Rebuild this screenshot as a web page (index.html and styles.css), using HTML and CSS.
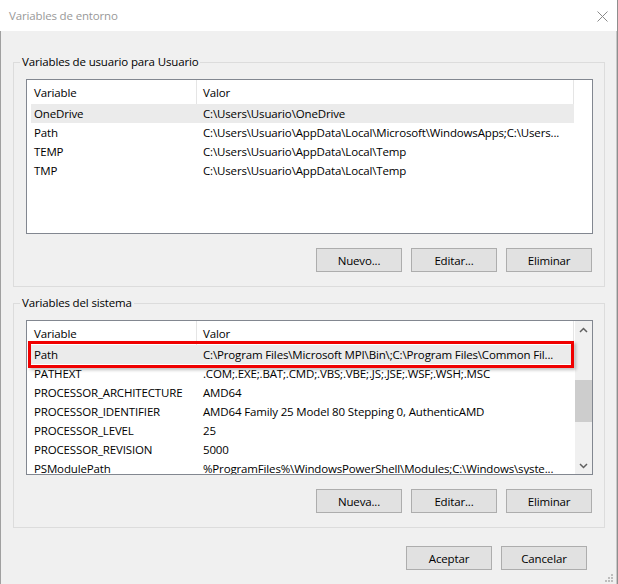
FILE: index.html
```html
<!DOCTYPE html>
<html lang="es">
<head>
<meta charset="utf-8">
<title>Variables de entorno</title>
<link rel="stylesheet" href="styles.css">
</head>
<body>
<div class="window">
  <div class="titlebar">
    <span class="title">Variables de entorno</span>
    <svg class="close" width="11" height="11" viewBox="0 0 11 11">
      <path d="M0.5 0.5 L10.5 10.5 M10.5 0.5 L0.5 10.5" stroke="#8a8a8a" stroke-width="1" fill="none"/>
    </svg>
  </div>

  <div class="client">
    <fieldset class="group">
      <legend>Variables de usuario para Usuario</legend>
      <div class="listview">
        <div class="lv-content">
          <div class="lv-header">
            <div class="hcell name">Variable</div>
            <div class="hcell value">Valor</div>
          </div>
          <div class="row selected"><div class="cell name">OneDrive</div><div class="cell value">C:\Users\Usuario\OneDrive</div></div>
          <div class="row"><div class="cell name">Path</div><div class="cell value">C:\Users\Usuario\AppData\Local\Microsoft\WindowsApps;C:\Users...</div></div>
          <div class="row"><div class="cell name">TEMP</div><div class="cell value">C:\Users\Usuario\AppData\Local\Temp</div></div>
          <div class="row"><div class="cell name">TMP</div><div class="cell value">C:\Users\Usuario\AppData\Local\Temp</div></div>
        </div>
      </div>
      <div class="actions">
        <button>Nuevo...</button>
        <button>Editar...</button>
        <button>Eliminar</button>
      </div>
    </fieldset>

    <fieldset class="group system">
      <legend>Variables del sistema</legend>
      <div class="listview">
        <div class="lv-content">
          <div class="lv-header">
            <div class="hcell name">Variable</div>
            <div class="hcell value">Valor</div>
          </div>
          <div class="row selected marked"><div class="cell name">Path</div><div class="cell value">C:\Program Files\Microsoft MPI\Bin\;C:\Program Files\Common Fil...</div><div class="mark"></div></div>
          <div class="row"><div class="cell name">PATHEXT</div><div class="cell value">.COM;.EXE;.BAT;.CMD;.VBS;.VBE;.JS;.JSE;.WSF;.WSH;.MSC</div></div>
          <div class="row"><div class="cell name">PROCESSOR_ARCHITECTURE</div><div class="cell value">AMD64</div></div>
          <div class="row"><div class="cell name">PROCESSOR_IDENTIFIER</div><div class="cell value">AMD64 Family 25 Model 80 Stepping 0, AuthenticAMD</div></div>
          <div class="row"><div class="cell name">PROCESSOR_LEVEL</div><div class="cell value">25</div></div>
          <div class="row"><div class="cell name">PROCESSOR_REVISION</div><div class="cell value">5000</div></div>
          <div class="row"><div class="cell name">PSModulePath</div><div class="cell value">%ProgramFiles%\WindowsPowerShell\Modules;C:\Windows\syste...</div></div>
        </div>
        <div class="scrollbar">
          <div class="sb-btn">
            <svg width="9" height="6" viewBox="0 0 9 6"><path d="M1 5 L4.5 1.5 L8 5" stroke="#606060" stroke-width="1.5" fill="none"/></svg>
          </div>
          <div class="sb-track"><div class="sb-thumb"></div></div>
          <div class="sb-btn">
            <svg width="9" height="6" viewBox="0 0 9 6"><path d="M1 1 L4.5 4.5 L8 1" stroke="#606060" stroke-width="1.5" fill="none"/></svg>
          </div>
        </div>
      </div>
      <div class="actions">
        <button>Nueva...</button>
        <button>Editar...</button>
        <button>Eliminar</button>
      </div>
    </fieldset>

    <div class="dialog-actions">
      <button>Aceptar</button>
      <button>Cancelar</button>
    </div>

    <svg class="grip" width="10" height="10" viewBox="0 0 10 10">
      <rect x="7" y="1" width="2" height="2" fill="#bdbdbd"/>
      <rect x="4" y="4" width="2" height="2" fill="#bdbdbd"/>
      <rect x="7" y="4" width="2" height="2" fill="#bdbdbd"/>
      <rect x="1" y="7" width="2" height="2" fill="#bdbdbd"/>
      <rect x="4" y="7" width="2" height="2" fill="#bdbdbd"/>
      <rect x="7" y="7" width="2" height="2" fill="#bdbdbd"/>
    </svg>
  </div>
</div>
</body>
</html>
```

FILE: styles.css
```css
* {
  box-sizing: border-box;
}

html,
body {
  margin: 0;
  height: 100%;
}

body {
  background: #8e8e8e;
  font-family: "Open Sans", "Segoe UI", sans-serif;
  font-size: 11.5px;
  letter-spacing: -0.15px;
  color: #000;
  overflow: hidden;
}

.window {
  width: 617px;
  height: 584px;
  display: flex;
  flex-direction: column;
  background: #f0f0f0;
}

/* Title bar */
.titlebar {
  height: 31px;
  flex: none;
  background: #fff;
  display: flex;
  align-items: center;
  justify-content: space-between;
  padding: 0 9px 0 9px;
}

.title {
  color: #999;
}

.close {
  display: block;
  margin-top: 1px;
}

/* Client area */
.client {
  flex: 1;
  position: relative;
  border-left: 1px solid #a0a0a0;
  border-right: 1px solid #c8c8c8;
  padding-top: 23px;
}

/* Group boxes */
.group {
  margin: 0 0 0 12px;
  width: 592px;
  min-width: 0;
  border: 1px solid #dcdcdc;
  padding: 9px 11px 14px 12px;
}

.group.system {
  margin-top: 8px;
}

.group legend {
  padding: 0 2px;
  margin-left: -6px;
  line-height: 16px;
}

/* List views */
.listview {
  height: 155px;
  border: 1px solid #828790;
  background: #fff;
  display: flex;
  overflow: hidden;
}

.lv-content {
  flex: 1;
  min-width: 0;
}

.lv-header {
  display: flex;
  height: 24px;
  width: 547px;
}

.hcell {
  line-height: 25px;
  border-right: 1px solid #e5e5e5;
  white-space: nowrap;
}

.hcell.name {
  width: 170px;
  padding-left: 7px;
}

.hcell.value {
  width: 377px;
  padding-left: 6px;
}

.row {
  display: flex;
  height: 19px;
  line-height: 20px;
  margin-left: 4px;
  width: 543px;
  white-space: nowrap;
}

.row.selected {
  background: #ebebeb;
}

.cell.name {
  width: 166px;
  flex: none;
  padding-left: 3px;
}

.cell.value {
  flex: 1;
  min-width: 0;
  padding-left: 6px;
  overflow: hidden;
}

/* Highlight drawn around the marked row */
.row.marked {
  position: relative;
}

.mark {
  position: absolute;
  left: -3px;
  top: -4px;
  width: 546px;
  height: 27px;
  border: 3px solid #f00000;
  box-shadow: 2px 2px 3px rgba(0, 0, 0, 0.25);
}

/* Vertical scrollbar */
.scrollbar {
  width: 17px;
  flex: none;
  background: #f0f0f0;
  display: flex;
  flex-direction: column;
}

.sb-btn {
  height: 17px;
  flex: none;
  display: flex;
  align-items: center;
  justify-content: center;
}

.sb-track {
  flex: 1;
  padding-top: 42px;
}

.sb-thumb {
  height: 42px;
  background: #cdcdcd;
}

/* Buttons */
button {
  font: inherit;
  letter-spacing: inherit;
  color: #000;
  width: 86px;
  height: 24px;
  padding: 0;
  background: #e1e1e1;
  border: 1px solid #adadad;
  border-radius: 0;
}

.actions {
  display: flex;
  justify-content: flex-end;
  gap: 9px;
  margin-top: 14px;
  padding-right: 1px;
}

.dialog-actions {
  display: flex;
  justify-content: flex-end;
  gap: 9px;
  margin-top: 18px;
  padding-right: 29px;
}

.grip {
  position: absolute;
  right: 2px;
  bottom: 1px;
}
```
